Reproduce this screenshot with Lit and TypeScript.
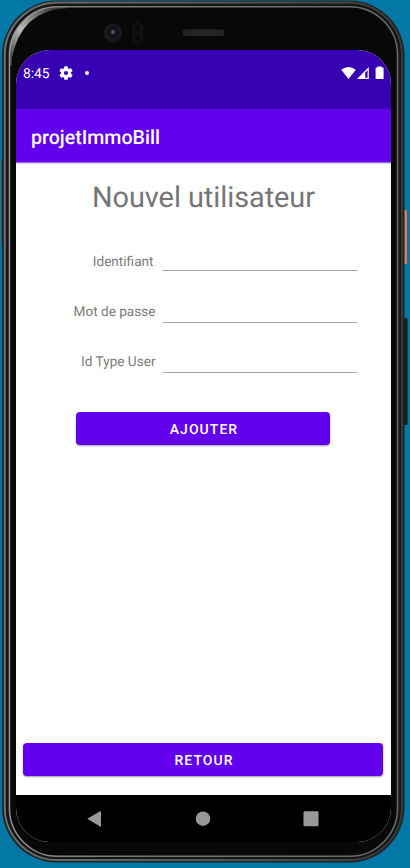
import { LitElement, html, css } from "lit";
import { customElement } from "lit/decorators.js";

@customElement("device-frame")
class DeviceFrame extends LitElement {
  static styles = css`
    :host { display: block; }
    svg { display: block; }
  `;

  render() {
    return html`
      <svg width="410" height="868" viewBox="0 0 410 868">
        <defs>
          <linearGradient id="bezel" x1="0" y1="0" x2="1" y2="0">
            <stop offset="0" stop-color="#6c7070" />
            <stop offset=".5" stop-color="#555858" />
            <stop offset="1" stop-color="#3a3c3c" />
          </linearGradient>
          <linearGradient id="shine" x1="0" y1="0" x2="1" y2="0">
            <stop offset="0" stop-color="#8c8e8c" />
            <stop offset=".3" stop-color="#777876" />
            <stop offset="1" stop-color="#666868" />
          </linearGradient>
          <linearGradient id="gloss" x1="0" y1="1" x2="1" y2="0">
            <stop offset="0" stop-color="#b4b4b0" stop-opacity=".2" />
            <stop offset=".4" stop-color="#bcbcb8" />
            <stop offset="1" stop-color="#b4b4b0" stop-opacity=".1" />
          </linearGradient>
          <radialGradient id="lens" cx=".5" cy=".45" r=".5">
            <stop offset="0" stop-color="#7d83a8" />
            <stop offset=".2" stop-color="#262a3c" />
            <stop offset=".45" stop-color="#0c0d12" />
            <stop offset=".75" stop-color="#1c1c1e" />
            <stop offset="1" stop-color="#121213" />
          </radialGradient>
        </defs>
        <rect x="402" y="210" width="5" height="54" rx="1.5" fill="#e8765c" />
        <rect x="402" y="318" width="5.6" height="107" rx="1.5" fill="#1c1f20" />
        <rect x="1" y="160" width="2" height="85" fill="#3d5960" />
        <rect x="2" y=".5" width="402.500" height="862" rx="55" fill="#202222" />
        <rect x="4.750" y="2.500" width="397" height="857.500" rx="53" fill="none" stroke="url(#bezel)" stroke-width="2" />
        <rect x="7" y="5" width="393" height="853" rx="50.500" fill="none" stroke="#151616" stroke-width="2" />
        <rect x="9.500" y="6.750" width="388" height="849.500" rx="48" fill="#080809" stroke="url(#shine)" stroke-width="1.500" />
        <path d="M9.500 66V55A48 48 0 0 1 58 7H68V8.500H64Q22 11 12 57V66Z" fill="url(#gloss)" />
        <circle cx="113" cy="33" r="9.500" fill="url(#lens)" />
        <rect x="133" y="23" width="9.500" height="20" rx="4.500" fill="#101011" stroke="#151516" />
        <circle cx="137.500" cy="28" r="3" fill="#0a0a0b" />
        <circle cx="137.500" cy="38" r="3" fill="#0a0a0b" />
        <rect x="182.500" y="29.500" width="42" height="6.500" rx="3" fill="#242424" />
      </svg>
    `;
  }
}

@customElement("status-bar")
class StatusBar extends LitElement {
  static styles = css`
    :host {
      display: flex;
      justify-content: space-between;
      align-items: flex-start;
      height: 59px;
      box-sizing: border-box;
      padding: 15px 7px 0 7px;
      background: #3700b3;
      color: #fff;
      font: 400 13.800px/16px Roboto, sans-serif;
    }
    .left, .right { display: flex; align-items: center; height: 16px; }
    .time { width: 36px; padding-top: 2px; }
    .dot { width: 4px; height: 4px; border-radius: 50%; background: #fff; margin-left: 12px; }
    svg { display: block; }
  `;

  render() {
    return html`
      <div class="left">
        <span class="time">8:45</span>
        <svg width="14" height="14" viewBox="2 2 20 20">
          <path fill="#fff" d="M19.140 12.940c.04-.3.06-.61.06-.94s-.02-.64-.07-.94l2.030-1.580a.49.49 0 0 0 .12-.61l-1.920-3.320a.49.49 0 0 0-.59-.22l-2.390.96a7 7 0 0 0-1.620-.94l-.36-2.540a.48.48 0 0 0-.48-.41h-3.840a.48.48 0 0 0-.47.41l-.36 2.540a7.300 7.300 0 0 0-1.620.94l-2.390-.96a.48.48 0 0 0-.59.220L2.740 8.870a.47.47 0 0 0 .12.61l2.030 1.580a6 6 0 0 0 0 1.880l-2.030 1.580a.49.49 0 0 0-.12.61l1.920 3.320c.12.22.37.29.59.22l2.390-.96c.5.38 1.030.7 1.620.94l.36 2.540c.05.24.24.41.48.41h3.840c.24 0 .44-.17.47-.41l.36-2.540a7 7 0 0 0 1.620-.94l2.390.96c.22.08.47 0 .59-.22l1.920-3.320a.47.47 0 0 0-.12-.61zM12 15a3 3 0 1 1 0-6 3 3 0 0 1 0 6z" />
        </svg>
        <span class="dot"></span>
      </div>
      <div class="right">
        <svg width="43" height="14" viewBox="341 66 43 14" fill="#fff">
          <path d="M341.200 69.700Q348.500 64.500 355.800 69.700L348.500 79Z" />
          <path d="M357 79L368.800 67V79Z" />
          <path d="M365.200 72.600L367.600 70.200V77.800H365.200Z" fill="#3700b3" />
          <path d="M377.500 66.500h4v1h1.500q.6 0 .6.600v10.300q0 .6-.6.600h-6.800q-.6 0-.6-.6V68.100q0-.6.6-.6h1.300z" />
        </svg>
      </div>
    `;
  }
}

@customElement("form-row")
class FormRow extends LitElement {
  static properties = { label: {}, kind: {} };
  declare label: string;
  declare kind: string;

  static styles = css`
    :host { display: flex; height: 100%; align-items: flex-start; }
    .label {
      width: 139.500px;
      text-align: right;
      white-space: nowrap;
      color: #7c7c7c;
      font: 400 13.600px/16px Roboto, sans-serif;
      text-rendering: geometricPrecision;
    }
    .short { width: 137.500px; padding-top: 1px; }
    .short + .line { margin-left: 9.500px; height: 18px; }
    .line {
      width: 194px;
      height: 19px;
      margin-left: 7.500px;
      border-bottom: 1px solid #a5a5a5;
      box-sizing: border-box;
    }
  `;

  render() {
    return html`
      <span class="label ${this.kind}">${this.label}</span>
      <span class="line"></span>
    `;
  }
}

@customElement("app-root")
class AppRoot extends LitElement {
  static styles = css`
    :host {
      display: block;
      position: relative;
      width: 410px;
      height: 868px;
      overflow: hidden;
      background: #0378a6;
      font-family: Roboto, sans-serif;
      text-rendering: geometricPrecision;
    }
    device-frame { position: absolute; inset: 0; }
    .stage { position: relative; padding: 50px 19px 26px 16px; height: 868px; box-sizing: border-box; }
    .screen {
      display: flex;
      flex-direction: column;
      height: 792px;
      border-radius: 34px;
      overflow: hidden;
      background: #fff;
    }
    .appbar {
      display: flex;
      align-items: center;
      height: 54px;
      padding: 4px 15px 0;
      box-sizing: border-box;
      background: #6200ee;
      color: #fff;
      font-size: 19.600px;
      font-weight: 500;
      border-bottom: 1px solid #9a68ee;
      box-shadow: 0 1px 1px rgba(0, 0, 0, 0.14);
    }
    .content { flex: 1; display: flex; flex-direction: column; }
    h1 {
      margin: 17px 0 0;
      height: 36px;
      font: 400 28.900px/36px Roboto, sans-serif;
      letter-spacing: -0.050px;
      color: #757575;
      text-align: center;
      white-space: nowrap;
    }
    .rows { display: grid; grid-template-rows: 51px 50px 58px; margin-top: 37px; }
    .btn {
      display: flex;
      align-items: center;
      justify-content: center;
      height: 33px;
      border: 0;
      border-radius: 4px;
      padding: 3px 0 0 2px;
      background: #6200ee;
      color: #fff;
      font: 500 14px/16px Roboto, sans-serif;
      letter-spacing: 1.050px;
      text-rendering: geometricPrecision;
      box-shadow: 0 1px 2px rgba(0, 0, 0, 0.4);
    }
    .add { width: 254px; margin: 0 0 0 60px; }
    .back { width: 360px; margin: auto 0 19px 7px; }
    .nav { height: 47px; background: #000; }
    .nav svg { display: block; }
  `;

  render() {
    return html`
      <device-frame></device-frame>
      <div class="stage">
        <div class="screen">
          <status-bar></status-bar>
          <div class="appbar">projetImmoBill</div>
          <div class="content">
            <h1>Nouvel utilisateur</h1>
            <div class="rows">
              <form-row label="Identifiant" kind="short"></form-row>
              <form-row label="Mot de passe" kind=""></form-row>
              <form-row label="Id Type User" kind=""></form-row>
            </div>
            <button class="btn add">AJOUTER</button>
            <button class="btn back">RETOUR</button>
          </div>
          <div class="nav">
            <svg width="375" height="47" viewBox="16 795 375 47" fill="#999">
              <path d="M87.200 818.800L100.200 811.300Q101 811 101 811.800V826.200Q101 827 100.200 826.600Z" />
              <circle cx="203" cy="818.700" r="7.200" />
              <rect x="303.500" y="811.300" width="15" height="15" rx="1.200" />
            </svg>
          </div>
        </div>
      </div>
    `;
  }
}
